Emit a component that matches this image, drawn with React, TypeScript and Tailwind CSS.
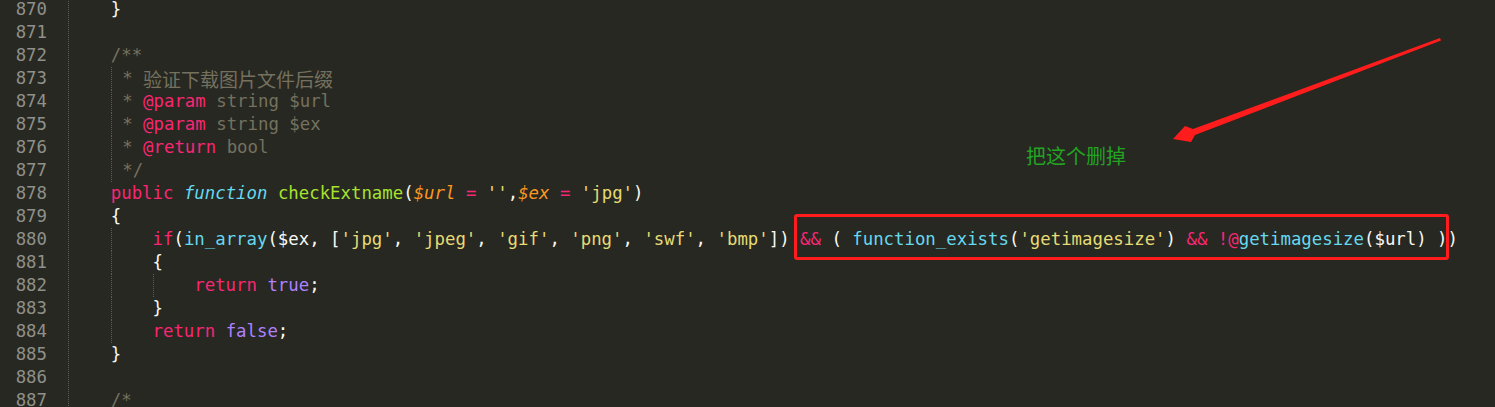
import React from 'react';

type Tok = [string, string?];

const C = {
  pk: 'text-[#f92672]',
  cy: 'text-[#66d9ef]',
  cyi: 'text-[#66d9ef] italic',
  gr: 'text-[#a6e22e]',
  ye: 'text-[#e6db74]',
  pu: 'text-[#ae81ff]',
  or: 'text-[#fd971f] italic',
  wh: 'text-[#f8f8f2]',
  cm: 'text-[#75715e]',
};

type Line = {
  no: number;
  indent: number; // 4-space units before content
  guides?: number[]; // indent unit index that carries a dotted guide
  toks: Tok[];
};

const lines: Line[] = [
  { no: 870, indent: 1, toks: [['}', C.wh]] },
  { no: 871, indent: 0, toks: [] },
  { no: 872, indent: 1, toks: [['/**', C.cm]] },
  { no: 873, indent: 1, guides: [1], toks: [[' * ', C.cm], ['验证下载图片文件后缀', 'cjk']] },
  { no: 874, indent: 1, guides: [1], toks: [[' * ', C.cm], ['@param', C.pk], [' string $url', C.cm]] },
  { no: 875, indent: 1, guides: [1], toks: [[' * ', C.cm], ['@param', C.pk], [' string $ex', C.cm]] },
  { no: 876, indent: 1, guides: [1], toks: [[' * ', C.cm], ['@return', C.pk], [' bool', C.cm]] },
  { no: 877, indent: 1, guides: [1], toks: [[' */', C.cm]] },
  {
    no: 878,
    indent: 1,
    toks: [
      ['public', C.pk], [' '], ['function', C.cyi], [' '], ['checkExtname', C.gr], ['(', C.wh],
      ['$url', C.or], [' '], ['=', C.pk], [' '], ["''", C.ye], [',', C.wh], ['$ex', C.or], [' '],
      ['=', C.pk], [' '], ["'jpg'", C.ye], [')', C.wh],
    ],
  },
  { no: 879, indent: 1, toks: [['{', C.wh]] },
  {
    no: 880,
    indent: 2,
    guides: [1],
    toks: [
      ['if', C.pk], ['(', C.wh], ['in_array', C.cy], ['($ex, [', C.wh],
      ["'jpg'", C.ye], [', ', C.wh], ["'jpeg'", C.ye], [', ', C.wh], ["'gif'", C.ye], [', ', C.wh],
      ["'png'", C.ye], [', ', C.wh], ["'swf'", C.ye], [', ', C.wh], ["'bmp'", C.ye], ['])', C.wh], [' '],
      ['&&', C.pk], [' ( ', C.wh], ['function_exists', C.cy], ['(', C.wh], ["'getimagesize'", C.ye],
      [') ', C.wh], ['&&', C.pk], [' '], ['!@', C.pk], ['getimagesize', C.cy], ['($url) ))', C.wh],
    ],
  },
  { no: 881, indent: 2, guides: [1], toks: [['{', C.wh]] },
  { no: 882, indent: 3, guides: [1, 2], toks: [['return', C.pk], [' '], ['true', C.pu], [';', C.wh]] },
  { no: 883, indent: 2, guides: [1], toks: [['}', C.wh]] },
  { no: 884, indent: 2, guides: [1], toks: [['return', C.pk], [' '], ['false', C.pu], [';', C.wh]] },
  { no: 885, indent: 1, toks: [['}', C.wh]] },
  { no: 886, indent: 0, toks: [] },
  { no: 887, indent: 1, toks: [['/*', C.cm]] },
];

function CodeLine({ line }: { line: Line }) {
  const units = [];
  for (let i = 0; i < line.indent; i++) {
    const guided = i > 0 && line.guides?.includes(i);
    units.push(
      <span
        key={i}
        className={
          guided
            ? 'w-[4ch] shrink-0 h-full border-l border-dotted border-[#5c5c52]'
            : 'w-[4ch] shrink-0 h-full'
        }
      />
    );
  }
  // guide that sits right where the text starts (comment block)
  const trailingGuide = line.guides?.includes(line.indent);
  return (
    <div className="flex h-[23px] leading-[23px] whitespace-pre">
      {units}
      {trailingGuide && <span className="w-0 h-full border-l border-dotted border-[#5c5c52]" />}
      {line.toks.map(([t, cls], i) =>
        cls === 'cjk' ? (
          <span key={i} className="text-[#75715e] text-[19px] font-['Noto_Sans_CJK_SC',sans-serif]">
            {t}
          </span>
        ) : (
          <span key={i} className={cls ?? C.wh}>
            {t}
          </span>
        )
      )}
    </div>
  );
}

export default function App() {
  return (
    <div className="relative w-[1495px] h-[407px] overflow-hidden bg-[#272822] font-['DejaVu_Sans_Mono','Noto_Sans_CJK_SC',monospace] text-[17.35px]">
      <div className="flex mt-[-2px]">
        <div className="w-[68px] shrink-0 pr-[21px] text-right text-[#8f908a]">
          {lines.map((l) => (
            <div key={l.no} className="h-[23px] leading-[23px]">
              {l.no}
            </div>
          ))}
        </div>
        <div className="flex-1 border-l border-dotted border-[#5c5c52] min-h-[420px]">
          {lines.map((l) => (
            <CodeLine key={l.no} line={l} />
          ))}
        </div>
      </div>

      {/* annotation: red box */}
      <div className="absolute left-[794px] top-[214px] w-[655px] h-[46px] border-[3px] border-[#ff1c1c] rounded-[3px]" />

      {/* annotation: arrow */}
      <svg className="absolute left-0 top-0" width="1495" height="407" viewBox="0 0 1495 407">
        <polygon
          points="1440,38 1441,40.5 1195,135 1191,142 1173,139 1185,126 1193,129"
          fill="#ff1c1c"
        />
      </svg>

      <div className="absolute left-[1026px] top-[142px] text-[20px] leading-[28px] text-[#22a322] font-['Noto_Sans_CJK_SC',sans-serif]">
        把这个删掉
      </div>
    </div>
  );
}
